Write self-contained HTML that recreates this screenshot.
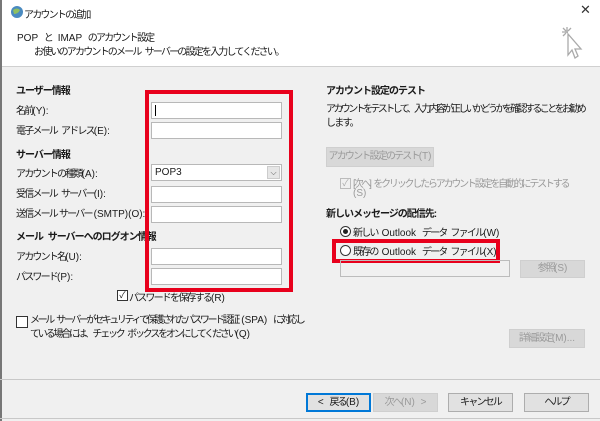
<!DOCTYPE html><html><head><meta charset="utf-8"><style>
*{margin:0;padding:0;box-sizing:border-box}
body{width:600px;height:421px;overflow:hidden;background:#f0f0f0;font-family:"Liberation Sans","Noto Sans CJK JP",sans-serif;font-size:10px;letter-spacing:-1.8px;word-spacing:3px;color:#1a1a1a;position:relative}
.a{position:absolute;white-space:nowrap}
.l{letter-spacing:0}
.hdr{position:absolute;left:0;top:0;width:600px;height:67px;background:#fff;border-bottom:1px solid #d0d0d0}
.in{position:absolute;background:#fff;border:1px solid #b8b8b8;height:17px;width:131px;left:151px}
.b{font-weight:bold;letter-spacing:-1px}
.btn{position:absolute;border:1px solid #adadad;background:#e1e1e1;text-align:center;white-space:nowrap;line-height:17px}
.dis{color:#9a9a9a;background:#d8d8d8;border-color:#cfcfcf}
.red{position:absolute;border:4px solid #e8001c}
</style></head><body>
<div class="hdr"></div>
<div style="position:absolute;left:0;top:0;width:2px;height:421px;background:#777"></div>
<svg class="a" style="left:10px;top:5px" width="14" height="14"><circle cx="7" cy="7" r="6" fill="#4a8ac0"/><path d="M3 5 Q7 2 10 5 Q8 9 4 9Z" fill="#8fc060"/></svg>
<div class="a" style="left:24px;top:6px">アカウントの追加</div>
<div class="a" style="left:580px;top:2px;font-size:13px;color:#333">✕</div>
<svg class="a" style="left:560px;top:25px" width="28" height="40" stroke="#aaa" fill="none" stroke-width="1.3"><path d="M7 2v6M2 7h6M3 3l3 3M11 3l-3 3M3 11l3-3"/><path d="M8 9 L8 30 L12 25 L15 33 L18 31 L15 24 L21 24 Z" fill="#fff"/></svg>
<div class="a" style="left:17px;top:29px"><span class="l">POP </span>と<span class="l"> IMAP </span>のアカウント設定</div>
<div class="a" style="left:34px;top:43px">お使いのアカウントのメール サーバーの設定を入力してください。</div>

<div class="a b" style="left:16px;top:82px">ユーザー情報</div>
<div class="a" style="left:16px;top:102px">名前<span class="l">(Y):</span></div>
<div class="a" style="left:16px;top:122px">電子メール アドレス<span class="l">(E):</span></div>
<div class="a b" style="left:16px;top:146px">サーバー情報</div>
<div class="a" style="left:16px;top:165px">アカウントの種類<span class="l">(A):</span></div>
<div class="a" style="left:16px;top:185px">受信メール サーバー<span class="l">(I):</span></div>
<div class="a" style="left:16px;top:205px;word-spacing:1px">送信メール サーバー <span class="l">(SMTP)(O):</span></div>
<div class="a b" style="left:16px;top:228px">メール サーバーへのログオン情報</div>
<div class="a" style="left:16px;top:248px">アカウント名<span class="l">(U):</span></div>
<div class="a" style="left:16px;top:268px">パスワード<span class="l">(P):</span></div>

<div class="in" style="top:102px"><div style="position:absolute;left:3px;top:2px;width:1px;height:11px;background:#000"></div></div>
<div class="in" style="top:122px"></div>
<div class="in l" style="top:164px;padding-left:3px;line-height:15px">POP3<div style="position:absolute;right:1px;top:1px;width:13px;height:13px;background:#e6e6e6;border:1px solid #ccc;font-size:8px;line-height:11px;text-align:center;color:#555">⌵</div></div>
<div class="in" style="top:186px"></div>
<div class="in" style="top:206px"></div>
<div class="in" style="top:248px"></div>
<div class="in" style="top:268px"></div>
<div class="red" style="left:145px;top:90px;width:148px;height:202px"></div>

<div class="a l" style="left:117px;top:290px;width:11px;height:11px;border:1px solid #333;background:#fff;font-size:9px;line-height:9px;text-align:center">✓</div>
<div class="a" style="left:129px;top:289px">パスワードを保存する<span class="l">(R)</span></div>
<div class="a" style="left:16px;top:316px;width:12px;height:12px;border:1px solid #333;background:#fff"></div>
<div class="a" style="left:30px;top:311px;letter-spacing:-2.4px">メール サーバーがセキュリティで保護されたパスワード認証 <span class="l">(SPA) </span>に対応し</div>
<div class="a" style="left:30px;top:325px;letter-spacing:-2.2px">ている場合には、チェック ボックスをオンにしてください<span class="l">(Q)</span></div>

<div class="a b" style="left:326px;top:82px">アカウント設定のテスト</div>
<div class="a" style="left:326px;top:100px;letter-spacing:-2.6px">アカウントをテストして、入力内容が正しいかどうかを確認することをお勧め</div>
<div class="a" style="left:326px;top:114px">します。</div>
<div class="btn dis" style="left:326px;top:147px;width:108px;height:20px">アカウント設定のテスト<span class="l">(T)</span></div>
<div class="a l" style="left:340px;top:178px;width:11px;height:11px;border:1px solid #bbb;font-size:9px;line-height:9px;color:#aaa;text-align:center">✓</div>
<div class="a" style="left:353px;top:175px;color:#9a9a9a;letter-spacing:-2.2px">[次へ] をクリックしたらアカウント設定を自動的にテストする</div>
<div class="a l" style="left:353px;top:188px;color:#9a9a9a">(S)</div>
<div class="a b" style="left:326px;top:205px">新しいメッセージの配信先:</div>
<div class="a" style="left:340px;top:226px;width:11px;height:11px;border:1px solid #333;border-radius:50%;background:#fff"><div style="margin:2px;width:5px;height:5px;border-radius:50%;background:#222"></div></div>
<div class="a" style="left:353px;top:224px">新しい <span class="l">Outlook </span>データ ファイル<span class="l">(W)</span></div>
<div class="a" style="left:340px;top:245px;width:11px;height:11px;border:1px solid #333;border-radius:50%;background:#fff"></div>
<div class="a" style="left:353px;top:243px">既存の <span class="l">Outlook </span>データ ファイル<span class="l">(X)</span></div>
<div class="red" style="left:332px;top:239px;width:168px;height:24px"></div>
<div class="a" style="left:340px;top:260px;width:170px;height:17px;border:1px solid #bcbcbc"></div>
<div class="btn dis" style="left:520px;top:260px;width:65px;height:18px;line-height:16px">参照<span class="l">(S)</span></div>
<div class="btn dis" style="left:509px;top:329px;width:76px;height:19px">詳細設定<span class="l">(M)...</span></div>

<div style="position:absolute;left:0;top:379px;width:600px;height:1px;background:#c8c8c8"></div>
<div class="btn" style="left:306px;top:393px;width:65px;height:19px;border:1px solid #0078d7;box-shadow:inset 0 0 0 1px #0078d7"><span class="l">&lt; </span>戻る<span class="l">(B)</span></div>
<div class="btn dis" style="left:373px;top:393px;width:65px;height:19px">次へ<span class="l">(N) &gt;</span></div>
<div class="btn" style="left:448px;top:393px;width:65px;height:19px">キャンセル</div>
<div class="btn" style="left:524px;top:393px;width:65px;height:19px">ヘルプ</div>
<div style="position:absolute;left:0;top:418px;width:600px;height:1px;background:#c8c8c8"></div>
</body></html>
